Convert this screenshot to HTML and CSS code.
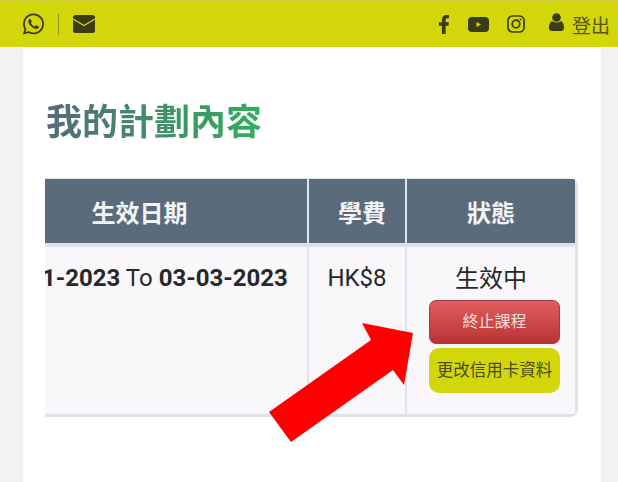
FILE: index.html
```html
<!DOCTYPE html>
<html lang="zh-Hant">
<head>
<meta charset="utf-8">
<title>我的計劃內容</title>
<link rel="stylesheet" href="styles.css">
</head>
<body>
<div class="topbar">
  <div class="topbar-left">
    <svg class="ico ico-wa" viewBox="0 0 448 512"><path d="M380.9 97.1C339 55.1 283.2 32 223.9 32c-122.4 0-222 99.6-222 222 0 39.1 10.2 77.3 29.6 111L0 480l117.7-30.9c32.4 17.7 68.9 27 106.1 27h.1c122.3 0 224.1-99.6 224.1-222 0-59.3-25.2-115-67.1-157zm-157 341.6c-33.2 0-65.7-8.9-94-25.7l-6.7-4-69.8 18.3L72 359.2l-4.4-7c-18.5-29.4-28.2-63.3-28.2-98.2 0-101.7 82.8-184.5 184.6-184.5 49.3 0 95.6 19.2 130.4 54.1 34.8 34.9 56.2 81.2 56.1 130.5 0 101.8-84.9 184.6-186.6 184.6zm101.2-138.2c-5.5-2.8-32.8-16.2-37.9-18-5.1-1.9-8.8-2.8-12.5 2.8-3.7 5.6-14.3 18-17.6 21.8-3.2 3.7-6.5 4.2-12 1.4-32.6-16.3-54-29.1-75.5-66-5.7-9.8 5.7-9.1 16.3-30.3 1.8-3.7.9-6.9-.5-9.7-1.4-2.8-12.5-30.1-17.1-41.2-4.5-10.8-9.1-9.3-12.5-9.5-3.2-.2-6.9-.2-10.6-.2-3.7 0-9.7 1.4-14.8 6.9-5.1 5.6-19.4 19-19.4 46.3 0 27.3 19.9 53.7 22.6 57.4 2.8 3.7 39.1 59.7 94.8 83.8 35.2 15.2 49 16.5 66.6 13.9 10.7-1.6 32.8-13.4 37.4-26.4 4.6-13 4.6-24.1 3.2-26.4-1.3-2.5-5-3.9-10.5-6.6z"/></svg>
    <span class="topbar-sep"></span>
    <svg class="ico ico-mail" viewBox="0 0 22 18"><rect width="22" height="18" rx="2.5"/><path class="mail-flap" d="M0 4 11 10.500 22 4"/></svg>
  </div>
  <div class="topbar-right">
    <svg class="ico ico-fb" viewBox="0 0 320 512"><path d="M279.14 288l14.22-92.66h-88.91v-60.13c0-25.35 12.42-50.06 52.24-50.06h40.42V6.26S260.43 0 225.36 0c-73.22 0-121.08 44.38-121.08 124.72v70.62H22.89V288h81.39v224h100.17V288z"/></svg>
    <svg class="ico ico-yt" viewBox="0 0 21 15"><rect width="21" height="15" rx="4"/><path class="yt-play" d="M8.500 5 13 7.500 8.500 10z"/></svg>
    <svg class="ico ico-ig" viewBox="0 0 18 18"><rect class="ig-line" x="1" y="1" width="16" height="16" rx="4.500"/><circle class="ig-line" cx="9" cy="9" r="3.800"/><circle cx="13.600" cy="4.400" r="1"/></svg>
    <a class="logout">
      <svg class="ico ico-user" viewBox="0 0 15 18"><circle cx="7.500" cy="4.500" r="4.300"/><path d="M0 15c0-4.500 1.500-6.800 3.600-6.800 1 .8 2.400 1.400 3.900 1.400s2.900-.6 3.900-1.400C13.500 8.200 15 10.500 15 15c0 2-1.300 3-3 3H3c-1.700 0-3-1-3-3z"/></svg>
      <span>登出</span>
    </a>
  </div>
</div>

<div class="page">
  <h1 class="page-title">我的計劃內容</h1>
  <div class="table-scroll">
    <table class="plan-table">
      <thead>
        <tr>
          <th class="col-date">生效日期</th>
          <th class="col-fee">學費</th>
          <th class="col-status">狀態</th>
        </tr>
      </thead>
      <tbody>
        <tr>
          <td class="col-date"><b>01-01-2023</b> To <b>03-03-2023</b></td>
          <td class="col-fee">HK$8</td>
          <td class="col-status">
            <div class="status-text">生效中</div>
            <a class="btn btn-red">終止課程</a>
            <a class="btn btn-yellow">更改信用卡資料</a>
          </td>
        </tr>
      </tbody>
    </table>
  </div>
</div>

<svg class="arrow" viewBox="0 0 618 482"><polygon points="269,412 371,340 362,323 413,333 404,385 393,370 291,442"/></svg>
</body>
</html>
```

FILE: styles.css
```css
/* Plan page */

html, body
{ margin: 0;
height: 482px;
overflow: hidden;
}

body
{ position: relative;
background-color: #f2f2f2;
font-family: Roboto, "Noto Sans CJK TC", sans-serif;
color: #26282b;
}

/* Top bar */

.topbar
{ display: flex;
justify-content: space-between;
align-items: center;
box-sizing: border-box;
height: 47px;
padding: 0 8px 0 23px;
background-color: #d4d60c;
border-top: 1px solid #c9cb3a;
}

.topbar-left, .topbar-right, .logout
{ display: flex;
align-items: center;
}

.ico
{ display: block;
fill: #3c3c14;
}

.ico-wa { width: 21px; height: 24px; }
.ico-mail { width: 22px; height: 18px; margin-left: 14px; }
.ico-fb { width: 12px; height: 19px; }
.ico-yt { width: 21px; height: 15px; margin-left: 18px; }
.ico-ig { width: 18px; height: 18px; margin-left: 18px; }
.ico-user { width: 15px; height: 18px; margin-top: -5px; }

.topbar-sep
{ width: 1px;
height: 21px;
margin-left: 14px;
background-color: #8f9012;
}

.mail-flap
{ fill: none;
stroke: #d4d60c;
stroke-width: 1.4;
}

.yt-play { fill: #d4d60c; }

.ig-line
{ fill: none;
stroke: #3c3c14;
stroke-width: 1.7;
}

.logout
{ margin-left: 24px;
gap: 8px;
font-size: 19px;
color: #55560f;
}

/* Content */

.page
{ box-sizing: border-box;
height: 435px;
margin: 0 17px 0 23px;
padding: 51px 24px 0 23px;
background-color: #fff;
}

.page-title
{ margin: 0 0 30px;
width: max-content;
font-size: 36px;
line-height: 50px;
font-weight: 700;
background: linear-gradient(90deg, #566a7c, #2eb05c);
-webkit-background-clip: text;
background-clip: text;
color: transparent;
}

.table-scroll
{ overflow: hidden;
width: 533px;
margin-left: -1px;
border-radius: 0 8px 8px 0;
}

.plan-table
{ margin-left: -73px;
border-collapse: separate;
border-spacing: 0;
table-layout: fixed;
width: 606px;
font-size: 24px;
background-color: #f9f7f9;
border-right: 3px solid #dde3ea;
border-bottom: 3px solid #dde3ea;
border-top: 1px solid #dde3ea;
}

.plan-table th
{ box-sizing: border-box;
height: 68px;
padding: 0;
background-color: #5a6b7b;
color: #f2f4f6;
font-size: 24px;
font-weight: 700;
border-bottom: 4px solid #dde3ea;
}

.plan-table th.col-fee
{ padding-left: 10px;
}

.plan-table td
{ height: 167px;
padding: 17px 0 0;
box-sizing: border-box;
vertical-align: top;
text-align: center;
white-space: nowrap;
}

.col-date { width: 337px; }
.col-fee { width: 98px; }

.plan-table .col-date, .plan-table .col-fee
{ box-sizing: border-box;
border-right: 2px solid #dde3ea;
}

.plan-table td.col-status
{ padding-top: 12px;
}

.status-text
{ margin-bottom: 6px;
}

.btn
{ display: block;
box-sizing: border-box;
width: 131px;
margin: 0 0 4px 22px;
font-size: 16px;
line-height: 42px;
border-radius: 7px;
}

.btn-red
{ background: linear-gradient(#e25e5e, #b83434);
border: 1px solid #a13a4e;
color: #f6dcdc;
}

.btn-yellow
{ height: 45px;
line-height: 45px;
border-radius: 10px;
background-color: #d4d60c;
color: #4a4b12;
font-size: 16.5px;
}

/* Annotation drawn over the screenshot */

.arrow
{ position: absolute;
left: 0;
top: 0;
width: 618px;
height: 482px;
fill: #fe0000;
}
```
